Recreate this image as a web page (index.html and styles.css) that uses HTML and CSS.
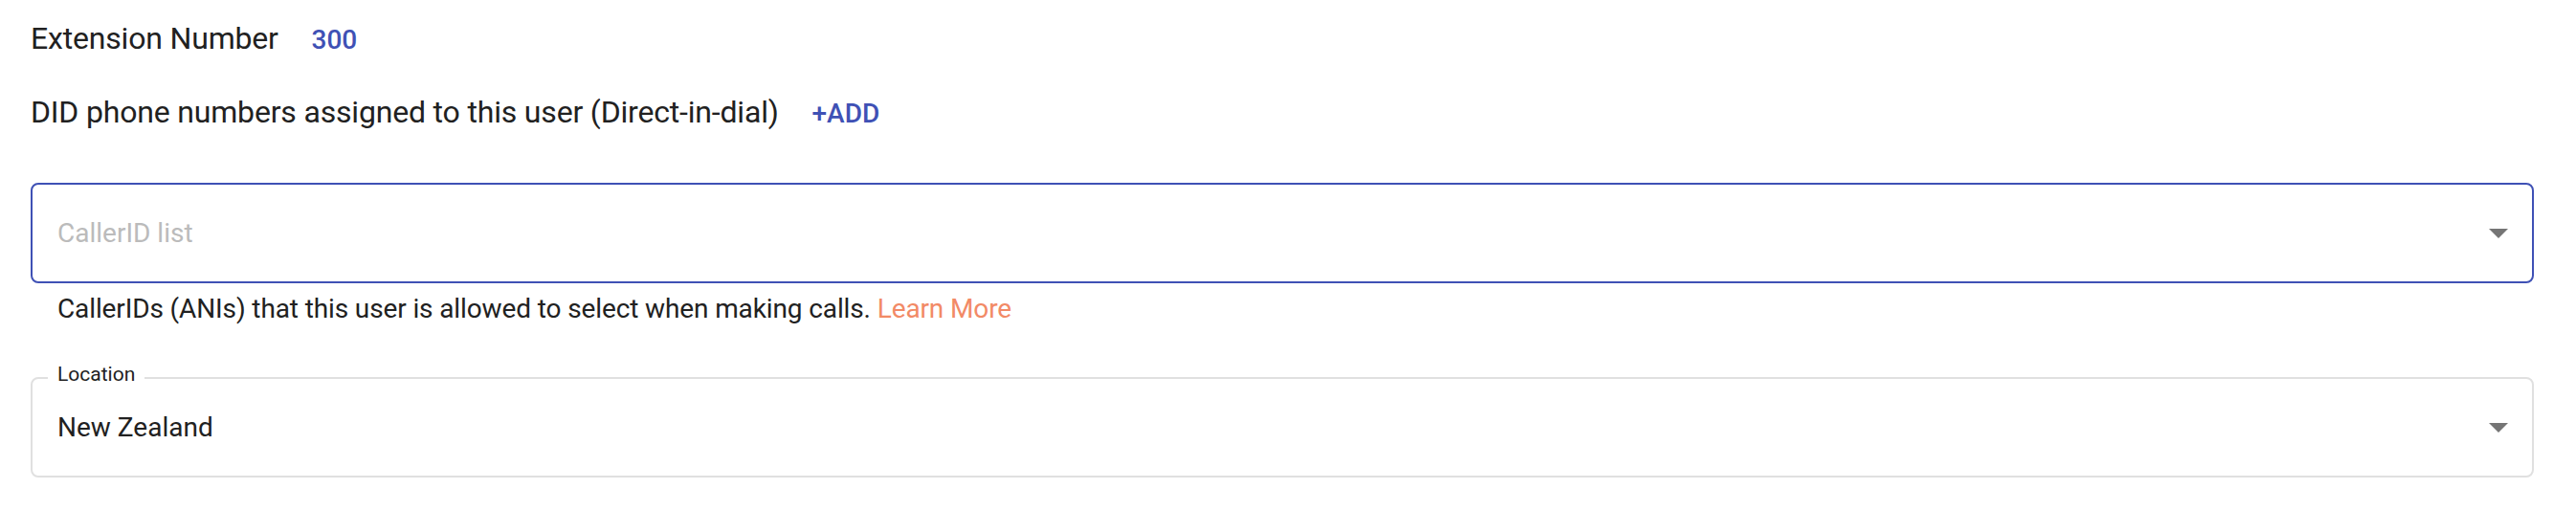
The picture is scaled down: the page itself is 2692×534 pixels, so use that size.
FILE: index.html
```html
<!DOCTYPE html>
<html lang="en">
<head>
    <meta charset="utf-8">
    <title>User settings</title>
    <link rel="stylesheet" href="styles.css">
</head>
<body>
    <div class="form">
        <div class="row extension">
            <span>Extension Number</span>
            <span class="value">300</span>
        </div>
        <div class="row did">
            <span>DID phone numbers assigned to this user (Direct-in-dial)</span>
            <a class="add" href="#">+ADD</a>
        </div>
        <div class="select focused">
            <span class="placeholder">CallerID list</span>
            <svg class="arrow" viewBox="7 10 10 5" width="20" height="10"><path d="M7 10l5 5 5-5z"/></svg>
        </div>
        <p class="helper">CallerIDs (ANIs) that this user is allowed to select when making calls. <a href="#">Learn More</a></p>
        <div class="select location">
            <span class="legend">Location</span>
            <span class="selected">New Zealand</span>
            <svg class="arrow" viewBox="7 10 10 5" width="20" height="10"><path d="M7 10l5 5 5-5z"/></svg>
        </div>
    </div>
</body>
</html>
```

FILE: styles.css
```css
body {
    margin: 0;
    background: #fff;
    font-family: Roboto, "Liberation Sans", sans-serif;
    color: #212121;
}
.form {
    padding: 16px 44px 0 32px;
}
.row {
    font-size: 32px;
    line-height: 48px;
    height: 48px;
    letter-spacing: -0.18px;
    white-space: nowrap;
}
.did {
    margin-top: 29px;
}
.value,
.add {
    margin-left: 27px;
    font-size: 28px;
    letter-spacing: 0;
    color: #3f51b5;
    font-weight: 500;
    text-decoration: none;
}
.select {
    position: relative;
    display: flex;
    align-items: center;
    justify-content: space-between;
    box-sizing: border-box;
    height: 105px;
    padding: 0 25px 0 26px;
    border: 2px solid #e0e0e0;
    border-radius: 8px;
    font-size: 28px;
}
.focused {
    margin-top: 50px;
    border-color: #3f51b5;
}
.placeholder {
    color: #bbbbbb;
}
.arrow {
    fill: #757575;
}
.helper {
    margin: 7px 0 0 28px;
    font-size: 28px;
    line-height: 40px;
    letter-spacing: -0.12px;
}
.helper a {
    color: #f28a66;
    text-decoration: none;
}
.location {
    margin-top: 51px;
}
.legend {
    position: absolute;
    top: -17px;
    left: 16px;
    padding: 0 10px;
    background: #fff;
    font-size: 21px;
    line-height: 24px;
}
```
